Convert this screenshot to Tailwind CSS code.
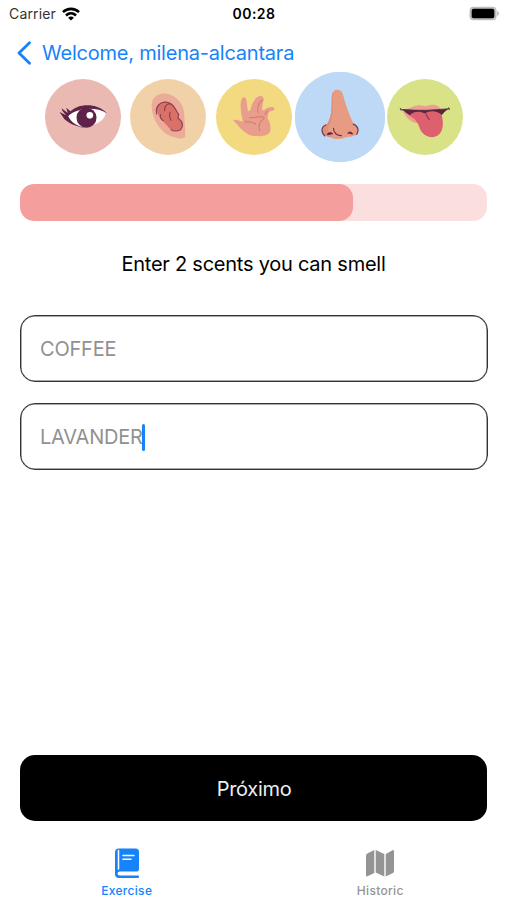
<!DOCTYPE html>
<html lang="en">
  <head>
    <meta charset="UTF-8" />
    <title>Exercise</title>
    <script src="https://cdn.jsdelivr.net/npm/@tailwindcss/browser@4"></script>
    <meta name="viewport" content="width=device-width, initial-scale=1.0" />
  </head>
  <body class="bg-white font-['Inter',sans-serif] text-black">
    <div class="flex h-[900px] w-[507px] flex-col overflow-hidden">
      <!-- Status bar -->
      <header class="grid h-[27px] grid-cols-3 items-center pl-[9px] pr-[8px] text-[14px]">
        <div class="flex items-center gap-[6px]">
          <span class="tracking-[0.15px] text-[#333]">Carrier</span>
          <svg class="h-[14px] w-[18px]" viewBox="0 0 18 14" fill="none" stroke="#000" stroke-width="2.6">
            <path d="M1 5.2C5.4 .7 12.6 .7 17 5.2" />
            <path d="M4 8.5c2.9-2.8 7.1-2.8 10 0" />
            <path d="M9 13.6 6.1 10.7c1.6-1.5 4.2-1.5 5.8 0z" fill="#000" stroke="none" />
          </svg>
        </div>
        <span class="text-center text-[14px] font-semibold tracking-[0.5px]">00:28</span>
        <svg class="h-[15px] w-[31px] justify-self-end" viewBox="0 0 31 15">
          <rect x="1.500" y=".7" width="27" height="13.600" rx="4" fill="#bdbdbd" />
          <rect x="3.700" y="2.700" width="22.600" height="9.600" rx="2" fill="#000" />
          <path d="M29 5c2.500 .8 2.500 4.200 0 5z" fill="#bdbdbd" />
        </svg>
      </header>

      <!-- Back navigation -->
      <nav class="flex h-[50px] items-center gap-[11px] pl-[17px] pt-px text-[#1683fb]">
        <svg class="h-[24px] w-[14px]" viewBox="0 0 14 24" fill="none" stroke="currentColor" stroke-width="2.8" stroke-linecap="round" stroke-linejoin="round">
          <path d="M12.500 1.800 2 12l10.500 10.200" />
        </svg>
        <span class="text-[20px] tracking-[-0.22px]">Welcome, milena-alcantara</span>
      </nav>

      <!-- The five senses, smell is the current one -->
      <section class="flex justify-center gap-[9.6px] pl-px pt-[2px]">
        <svg class="size-[76px]" viewBox="13.5 27 228 228">
          <circle cx="127.500" cy="141" r="114" fill="#eab9b2" />
          <path d="M82 137C104 112 167 103 196 130C191 153 166 166 137 170C112 169 91 158 82 137Z" fill="#fff" />
          <path d="M57 126L77 136L66 123L63 115L82 129L77 113L90 124C116 99 171 99 199 130C168 109 107 113 83 139C94 161 112 169 136 174C105 171 83 158 72 148Z" fill="#5d2348" />
          <circle cx="138" cy="143" r="30" fill="#5d2348" />
          <circle cx="148" cy="136" r="10" fill="#fff" />
        </svg>
        <svg class="size-[76px]" viewBox="16 27 228 228">
          <circle cx="130" cy="141" r="114" fill="#f1d2a8" />
          <path d="M81 105C82 79 105 66 130 72C157 77 179 107 179 134L182 199C179 211 153 205 132 196C108 184 80 146 81 105Z" fill="#ecaa98" />
          <path d="M95 116C99 96 121 91 138 99C154 109 155 124 162 133L160 145C176 154 176 170 168 179C157 185 137 183 129 169C120 156 100 145 95 116Z" fill="#d97169" />
          <path d="M96 132C91 110 106 96 124 96C147 99 151 119 162 133L160 145C176 154 176 170 168 179C160 183 147 184 139 179M120 122C119 109 126 102 137 101M108 134C105 142 111 149 116 152M137 127C131 135 137 144 139 151" fill="none" stroke="#8f4251" stroke-width="3.500" stroke-linecap="round" stroke-linejoin="round" />
        </svg>
        <svg class="size-[76px]" viewBox="18 27 228 228">
          <circle cx="132" cy="141" r="114" fill="#f3d97f" />
          <path d="M69 150C78 147 90 153 99 155C94 136 88 105 95 87C99 78 108 81 109 89L114 124L121 121C124 106 132 83 149 78C161 76 164 87 159 97L156 118L162 122C166 115 175 111 188 111C196 114 194 122 186 122C177 122 174 131 173 146C181 155 184 176 179 188C169 197 154 200 140 198C110 201 88 171 69 150Z" fill="#e99e8d" />
          <path d="M105 155C116 157 124 153 133 160L137 163M119 142C133 146 145 137 160 141C165 144 161 149 155 151C147 156 146 174 149 182M144 128C142 115 145 96 157 91M165 133L172 122" fill="none" stroke="#d77e74" stroke-width="3.500" stroke-linecap="round" stroke-linejoin="round" />
        </svg>
        <svg class="size-[76px] scale-[1.19]" viewBox="12.5 11 272 272">
          <circle cx="148.500" cy="147" r="136" fill="#bed9f5" />
          <path d="M125 78C128 62 151 60 157 78C165 108 175 137 187 163C202 170 209 187 200 198C188 209 168 205 159 211C145 215 126 213 118 207C104 207 90 192 97 177C101 169 109 172 113 163C128 134 121 103 125 78Z" fill="#e79b83" />
          <path d="M129 72C124 98 132 137 117 170C109 185 111 200 127 211L118 207C104 207 90 192 97 177C101 169 109 172 113 163C128 134 121 103 125 78Z" fill="#df8e78" />
          <path d="M106 171C90 177 92 195 103 204M188 169C203 174 207 188 199 199M129 181C128 194 140 204 153 203" fill="none" stroke="#713452" stroke-width="3.500" stroke-linecap="round" />
          <path d="M109 200C113 192 122 192 127 198C122 197 119 201 109 200ZM171 196C176 190 184 191 187 198C182 199 178 195 171 196Z" fill="#652845" stroke="#652845" stroke-width="2" />
        </svg>
        <svg class="size-[76px]" viewBox="21 27 228 228">
          <circle cx="135" cy="141" r="114" fill="#d9e287" />
          <path d="M66 119C86 119 101 105 119 106C130 106 134 112 142 107C158 101 173 104 183 116L202 118L110 160C88 154 77 141 66 119Z" fill="#ec9f8f" />
          <path d="M65 118C111 122 160 121 206 116C190 126 188 135 177 141C148 138 117 147 94 138C81 134 74 123 65 118Z" fill="#5d2342" />
          <path d="M88 137C102 122 121 124 134 130C152 120 172 122 185 134C192 162 189 185 174 196C157 207 136 201 126 187C115 174 119 151 88 137Z" fill="#dc606e" />
          <path d="M137 130C140 138 144 143 148 149" fill="none" stroke="#913650" stroke-width="3.500" stroke-linecap="round" />
          <path d="M64 119C111 123 160 121 207 116" fill="none" stroke="#4f2944" stroke-width="2.500" />
          <path d="M61 116L64 120M206 114L208 118" stroke="#63484b" stroke-width="4" stroke-linecap="round" />
        </svg>
      </section>

      <main class="flex flex-1 flex-col px-[20px] pt-[29px]">
        <!-- Progress -->
        <div class="h-[37px] w-[467px] overflow-hidden rounded-[14px] bg-[#fbdfdf]">
          <div class="h-full w-[333px] rounded-[14px] bg-[#f49f9d]"></div>
        </div>

        <h1 class="mt-[28px] text-center text-[20px] leading-[30px] tracking-[-0.24px]">Enter 2 scents you can smell</h1>

        <!-- Answers -->
        <div class="mt-[36px] flex flex-col gap-[21px] text-[20px] tracking-[-0.2px] text-[#919191]">
          <div class="flex h-[67px] w-[468px] items-center rounded-[15px] border border-[#333] pl-[19px] pt-px shadow-[inset_0_0_0_0.5px_#555]">
            <span>COFFEE</span>
          </div>
          <div class="flex h-[67px] w-[468px] items-center rounded-[15px] border border-[#333] pl-[19px] pt-px shadow-[inset_0_0_0_0.5px_#555]">
            <span>LAVANDER</span>
            <span class="-ml-px h-[27px] w-[3px] rounded-full bg-[#1683fb]"></span>
          </div>
        </div>

        <button class="mt-auto h-[66px] w-[467px] rounded-[15px] bg-black pl-px pt-px text-[20px] tracking-[-0.3px] text-[#eee]">Próximo</button>
      </main>

      <!-- Tab bar -->
      <footer class="grid h-[79px] grid-cols-2 pt-[26px] text-[12px] font-medium tracking-[0.3px]">
        <a class="flex flex-col items-center gap-[3px] text-[#1683fb]">
          <svg class="h-[32px] w-[26px]" viewBox="0 0 26 32">
            <path d="M5 1.500H21.500Q25 1.500 25 5V21.500Q25 24.500 23 24.500H6Q3.500 24.500 3.500 26.500T6 28.500H24Q25 28.500 25 29.800T24 31H5Q1 31 1 27V5.500Q1 1.500 5 1.500Z" fill="currentColor" />
            <path d="M4.500 3.500V22M9 8.500h11M9 12.200h8" stroke="#fff" stroke-width="1.500" stroke-linecap="round" />
          </svg>
          <span>Exercise</span>
        </a>
        <a class="flex flex-col items-center gap-[3px] text-[#949494]">
          <svg class="h-[32px] w-[30px]" viewBox="0 0 30 32" fill="currentColor">
            <path d="M1 9Q1 7.200 2.200 6.600L9.300 3v23L2.500 29.300Q1 30 1 28Z" />
            <path d="M10.700 3l8.600 4v22.500l-8.600-4Z" />
            <path d="M20.700 7l6.800-3.800Q29 2.500 29 4.500v19.500Q29 25.300 28 25.900L20.700 29.500Z" />
          </svg>
          <span>Historic</span>
        </a>
      </footer>
    </div>
  </body>
</html>
